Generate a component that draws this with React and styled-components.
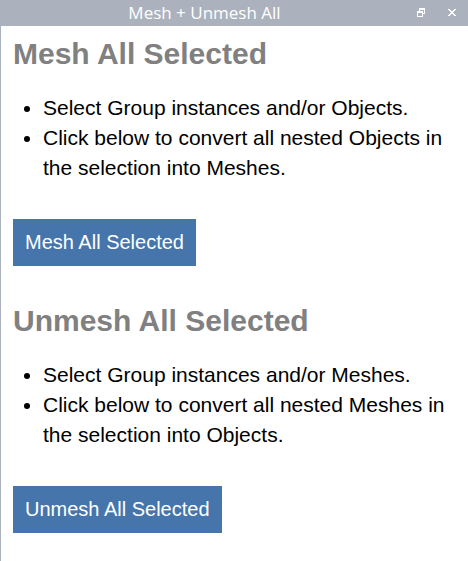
import React from "react";
import styled, { createGlobalStyle } from "styled-components";

const GlobalStyle = createGlobalStyle`
  * { box-sizing: border-box; }
  body { margin: 0; background: #fff; }
`;

const Panel = styled.div`
  min-height: 100vh;
  border-left: 1px solid #abb2be;
  background: #fff;
  color: #000;
  font-family: "Liberation Sans", Arial, sans-serif;
`;

const TitleBar = styled.header`
  display: grid;
  grid-template-columns: 1fr auto;
  align-items: center;
  height: 26px;
  margin-left: -1px;
  padding-right: 8px;
  background: #abb2be;
  color: #fff;
`;

const Title = styled.div`
  padding-right: 4px;
  text-align: center;
  font-family: "Open Sans", sans-serif;
  font-size: 17px;
  line-height: 24px;
`;

const WindowControls = styled.div`
  display: flex;
  gap: 15px;
`;

const WindowButton = styled.button`
  display: flex;
  align-items: center;
  justify-content: center;
  width: 16px;
  height: 16px;
  padding: 0;
  border: 0;
  background: none;
  color: inherit;
`;

const Content = styled.main`
  display: flex;
  flex-direction: column;
  gap: 37px;
  padding: 10px 12px 28px;
`;

const Section = styled.section`
  display: flex;
  flex-direction: column;
  align-items: flex-start;
`;

const Heading = styled.h1`
  margin: 0 0 21px;
  color: #808080;
  font-size: 30px;
  line-height: 36px;
`;

const Steps = styled.ul`
  margin: 0 0 36px;
  padding-left: 30px;
  font-size: 21px;
  line-height: 30px;
`;

const ActionButton = styled.button`
  height: 47px;
  padding: 0 12px;
  border: 0;
  background: #4575ab;
  color: #fff;
  font-family: inherit;
  font-size: 20px;
`;

const actions = [
  { label: "Mesh All Selected", from: "Objects", to: "Meshes" },
  { label: "Unmesh All Selected", from: "Meshes", to: "Objects" },
];

export default function App() {
  return (
    <>
      <GlobalStyle />
      <Panel>
        <TitleBar>
          <Title>Mesh + Unmesh All</Title>
          <WindowControls>
            <WindowButton type="button" aria-label="Restore">
              <svg width="10" height="10" viewBox="0 0 10 10" fill="currentColor" shapeRendering="crispEdges">
                <path d="M3 0h6v6H7V5h1V2H4v1H3zM1 3h6v6H1zM2 5v3h4V5z" fillRule="evenodd" />
              </svg>
            </WindowButton>
            <WindowButton type="button" aria-label="Close">
              <svg width="10" height="10" viewBox="0 0 10 10" fill="currentColor" shapeRendering="crispEdges">
                <path d="M1 1h2v1h1v1h2V2h1V1h2v1H8v1H7v1H6v1h1v1h1v1h1v1H7V7H6V6H4v1H3v1H1V7h1V6h1V5h1V4H3V3H2V2H1z" />
              </svg>
            </WindowButton>
          </WindowControls>
        </TitleBar>
        <Content>
          {actions.map(({ label, from, to }) => (
            <Section key={label}>
              <Heading>{label}</Heading>
              <Steps>
                <li>{`Select Group instances and/or ${from}.`}</li>
                <li>{`Click below to convert all nested ${from} in the selection into ${to}.`}</li>
              </Steps>
              <ActionButton type="button">{label}</ActionButton>
            </Section>
          ))}
        </Content>
      </Panel>
    </>
  );
}
